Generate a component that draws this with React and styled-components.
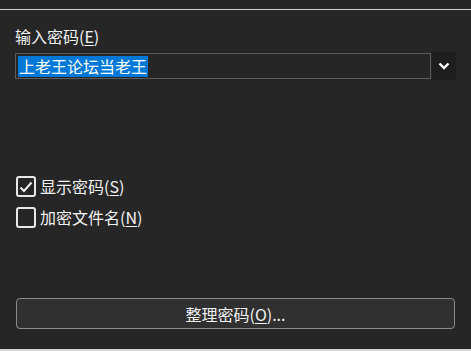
import { createGlobalStyle, styled } from 'styled-components'

const GlobalStyle = createGlobalStyle`
  html, body {
    margin: 0;
    padding: 0;
    background: #262626;
  }
  body {
    font-family: "Noto Sans", "Noto Sans CJK SC", sans-serif;
    color: #f2f2f2;
  }
`

const Page = styled.div`
  width: 471px;
  height: 351px;
  display: flex;
  flex-direction: column;
  background: #262626;
  overflow: hidden;
`

const TopRule = styled.div`
  margin-top: 9px;
  height: 1px;
  background: #cfcfcf;
`

const Body = styled.div`
  flex: 1;
  display: flex;
  flex-direction: column;
  padding: 0 15px 0 15px;
`

const FieldLabel = styled.div`
  margin-top: 15px;
  font-size: 16px;
  line-height: 22px;
  font-family: "Noto Sans CJK SC", sans-serif;
`

const Key = styled.span`
  text-decoration: underline;
  text-underline-offset: 2px;
`

const ComboRow = styled.div`
  margin-top: 5px;
  display: flex;
  align-items: center;
  height: 28px;
`

const InputBox = styled.div`
  flex: 1;
  height: 26px;
  box-sizing: border-box;
  border: 1px solid #5c5c5c;
  background: #262626;
  display: flex;
  align-items: center;
  padding-left: 2px;
`

const Selected = styled.span`
  background: #0078d7;
  color: #ffffff;
  font-family: "Noto Sans CJK SC", sans-serif;
  font-size: 16px;
  line-height: 21px;
  height: 21px;
  padding: 0 1px;
`

const DropButton = styled.div`
  width: 24px;
  height: 28px;
  margin-left: 1px;
  background: #1e1e1e;
  display: flex;
  align-items: center;
  justify-content: center;
`

const Checks = styled.div`
  margin-top: 96px;
  display: flex;
  flex-direction: column;
  gap: 10px;
`

const CheckRow = styled.label`
  display: flex;
  align-items: center;
  gap: 4px;
  font-family: "Noto Sans CJK SC", sans-serif;
  font-size: 16px;
  line-height: 21px;
  padding-left: 1px;
`

const Box = styled.span`
  width: 20px;
  height: 21px;
  box-sizing: border-box;
  border: 2px solid #e8e8e8;
  border-radius: 3px;
  display: flex;
  align-items: center;
  justify-content: center;
`

const Footer = styled.div`
  margin-top: auto;
  padding: 0 1px 20px 1px;
`

const ActionButton = styled.button`
  width: 100%;
  height: 31px;
  box-sizing: border-box;
  border: 1px solid #8c8c8c;
  border-radius: 4px;
  background: #303030;
  color: #f2f2f2;
  font-family: "Noto Sans CJK SC", sans-serif;
  font-size: 16px;
  line-height: 20px;
  padding: 0;
`

const BottomStrip = styled.div`
  height: 2px;
  background: #d6d6d6;
`

function CheckOption({ checked, text, hotkey }) {
  return (
    <CheckRow>
      <Box>
        {checked && (
          <svg width="14" height="12" viewBox="0 0 14 12">
            <polyline
              points="1.5,6.5 5,10 12.5,1.5"
              fill="none"
              stroke="#f0f0f0"
              strokeWidth="2"
            />
          </svg>
        )}
      </Box>
      <span>
        {text}(<Key>{hotkey}</Key>)
      </span>
    </CheckRow>
  )
}

export default function App() {
  return (
    <Page>
      <GlobalStyle />
      <TopRule />
      <Body>
        <FieldLabel>
          输入密码(<Key>E</Key>)
        </FieldLabel>
        <ComboRow>
          <InputBox>
            <Selected>上老王论坛当老王</Selected>
          </InputBox>
          <DropButton>
            <svg width="12" height="8" viewBox="0 0 12 8">
              <polyline
                points="1.5,1.5 6,6 10.5,1.5"
                fill="none"
                stroke="#ffffff"
                strokeWidth="2.4"
              />
            </svg>
          </DropButton>
        </ComboRow>
        <Checks>
          <CheckOption checked text="显示密码" hotkey="S" />
          <CheckOption text="加密文件名" hotkey="N" />
        </Checks>
        <Footer>
          <ActionButton>
            整理密码(<Key>O</Key>)...
          </ActionButton>
        </Footer>
      </Body>
      <BottomStrip />
    </Page>
  )
}
